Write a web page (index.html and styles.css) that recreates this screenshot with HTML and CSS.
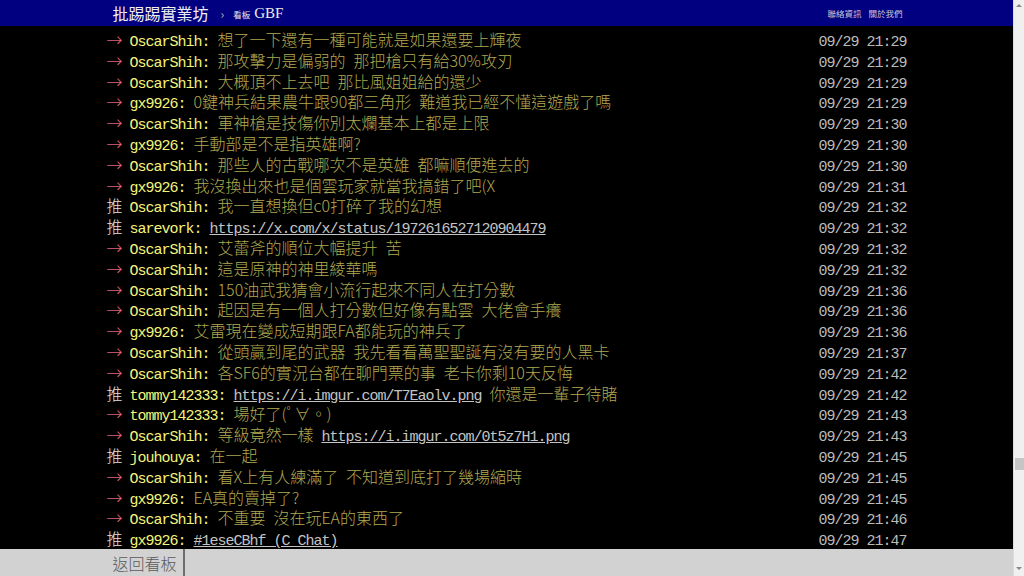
FILE: index.html
```html
<!DOCTYPE html>
<html lang="zh-Hant-TW">
<head>
    <meta charset="UTF-8">
    <meta name="viewport" content="width=device-width, initial-scale=1.0">
    <title>[閒聊] 軍神槍 - 看板 GBF - 批踢踢實業坊</title>
    <link rel="stylesheet" href="styles.css">
</head>
<body>
    <div class="page">
        <div class="topbar">
            <div class="topbar-inner">
                <a class="site-name" href="#">批踢踢實業坊</a>
                <span class="crumb-sep">&rsaquo;</span>
                <a class="board-name" href="#"><span class="board-label">看板</span>GBF</a>
                <div class="topbar-links">
                    <a href="#">聯絡資訊</a>
                    <a href="#">關於我們</a>
                </div>
            </div>
        </div>

        <div class="main">
            <div class="push-list">
                <div class="push"><span class="push-tag arrow">→</span><span class="push-userid">OscarShih:</span><span class="push-content">想了一下還有一種可能就是如果還要上輝夜</span><span class="push-time">09/29 21:29</span></div>
                <div class="push"><span class="push-tag arrow">→</span><span class="push-userid">OscarShih:</span><span class="push-content">那攻擊力是偏弱的 那把槍只有給30%攻刃</span><span class="push-time">09/29 21:29</span></div>
                <div class="push"><span class="push-tag arrow">→</span><span class="push-userid">OscarShih:</span><span class="push-content">大概頂不上去吧 那比風姐姐給的還少</span><span class="push-time">09/29 21:29</span></div>
                <div class="push"><span class="push-tag arrow">→</span><span class="push-userid">gx9926:</span><span class="push-content">0鍵神兵結果農牛跟90都三角形 難道我已經不懂這遊戲了嗎</span><span class="push-time">09/29 21:29</span></div>
                <div class="push"><span class="push-tag arrow">→</span><span class="push-userid">OscarShih:</span><span class="push-content">軍神槍是技傷你別太爛基本上都是上限</span><span class="push-time">09/29 21:30</span></div>
                <div class="push"><span class="push-tag arrow">→</span><span class="push-userid">gx9926:</span><span class="push-content">手動部是不是指英雄啊?</span><span class="push-time">09/29 21:30</span></div>
                <div class="push"><span class="push-tag arrow">→</span><span class="push-userid">OscarShih:</span><span class="push-content">那些人的古戰哪次不是英雄 都嘛順便進去的</span><span class="push-time">09/29 21:30</span></div>
                <div class="push"><span class="push-tag arrow">→</span><span class="push-userid">gx9926:</span><span class="push-content">我沒換出來也是個雲玩家就當我搞錯了吧(X</span><span class="push-time">09/29 21:31</span></div>
                <div class="push"><span class="push-tag">推</span><span class="push-userid">OscarShih:</span><span class="push-content">我一直想換但c0打碎了我的幻想</span><span class="push-time">09/29 21:32</span></div>
                <div class="push"><span class="push-tag">推</span><span class="push-userid">sarevork:</span><span class="push-content"><a href="#">https://x.com/x/status/1972616527120904479</a></span><span class="push-time">09/29 21:32</span></div>
                <div class="push"><span class="push-tag arrow">→</span><span class="push-userid">OscarShih:</span><span class="push-content">艾蕾斧的順位大幅提升 苦</span><span class="push-time">09/29 21:32</span></div>
                <div class="push"><span class="push-tag arrow">→</span><span class="push-userid">OscarShih:</span><span class="push-content">這是原神的神里綾華嗎</span><span class="push-time">09/29 21:32</span></div>
                <div class="push"><span class="push-tag arrow">→</span><span class="push-userid">OscarShih:</span><span class="push-content">150油武我猜會小流行起來不同人在打分數</span><span class="push-time">09/29 21:36</span></div>
                <div class="push"><span class="push-tag arrow">→</span><span class="push-userid">OscarShih:</span><span class="push-content">起因是有一個人打分數但好像有點雲 大佬會手癢</span><span class="push-time">09/29 21:36</span></div>
                <div class="push"><span class="push-tag arrow">→</span><span class="push-userid">gx9926:</span><span class="push-content">艾雷現在變成短期跟FA都能玩的神兵了</span><span class="push-time">09/29 21:36</span></div>
                <div class="push"><span class="push-tag arrow">→</span><span class="push-userid">OscarShih:</span><span class="push-content">從頭贏到尾的武器 我先看看萬聖聖誕有沒有要的人黑卡</span><span class="push-time">09/29 21:37</span></div>
                <div class="push"><span class="push-tag arrow">→</span><span class="push-userid">OscarShih:</span><span class="push-content">各SF6的實況台都在聊門票的事 老卡你剩10天反悔</span><span class="push-time">09/29 21:42</span></div>
                <div class="push"><span class="push-tag">推</span><span class="push-userid">tommy142333:</span><span class="push-content"><a href="#">https://i.imgur.com/T7Eaolv.png</a> 你還是一輩子待賭</span><span class="push-time">09/29 21:42</span></div>
                <div class="push"><span class="push-tag arrow">→</span><span class="push-userid">tommy142333:</span><span class="push-content">場好了(ﾟ∀。)</span><span class="push-time">09/29 21:43</span></div>
                <div class="push"><span class="push-tag arrow">→</span><span class="push-userid">OscarShih:</span><span class="push-content">等級竟然一樣 <a href="#">https://i.imgur.com/0t5z7H1.png</a></span><span class="push-time">09/29 21:43</span></div>
                <div class="push"><span class="push-tag">推</span><span class="push-userid">jouhouya:</span><span class="push-content">在一起</span><span class="push-time">09/29 21:45</span></div>
                <div class="push"><span class="push-tag arrow">→</span><span class="push-userid">OscarShih:</span><span class="push-content">看X上有人練滿了 不知道到底打了幾場縮時</span><span class="push-time">09/29 21:45</span></div>
                <div class="push"><span class="push-tag arrow">→</span><span class="push-userid">gx9926:</span><span class="push-content">EA真的賣掉了?</span><span class="push-time">09/29 21:45</span></div>
                <div class="push"><span class="push-tag arrow">→</span><span class="push-userid">OscarShih:</span><span class="push-content">不重要 沒在玩EA的東西了</span><span class="push-time">09/29 21:46</span></div>
                <div class="push"><span class="push-tag">推</span><span class="push-userid">gx9926:</span><span class="push-content"><a href="#">#1eseCBhf (C_Chat)</a></span><span class="push-time">09/29 21:47</span></div>
            </div>
        </div>

        <div class="footer">
            <div class="footer-inner">
                <a class="back-link" href="#">返回看板</a>
            </div>
        </div>
    </div>

    <div class="scrollbar">
        <span class="scroll-arrow up"></span>
        <div class="scroll-track"><span class="scroll-thumb"></span></div>
        <span class="scroll-arrow down"></span>
    </div>
</body>
</html>
```

FILE: styles.css
```css
html, body {
    height: 100%;
}

body {
    display: flex;
    margin: 0;
    overflow: hidden;
    background-color: #000000;
    font-family: 'Noto Sans CJK TC', sans-serif;
}

a {
    text-decoration: none;
}

.page {
    flex: 1;
    min-width: 0;
    display: flex;
    flex-direction: column;
}

/* top bar */
.topbar {
    flex: none;
    height: 26px;
    background-color: #000080;
}

.topbar-inner {
    width: 792px;
    height: 100%;
    margin: 0 auto;
    padding-left: 2px;
    box-sizing: border-box;
    display: flex;
    align-items: center;
}

.site-name {
    color: #eeeeee;
    font-size: 16px;
    line-height: 20px;
}

.crumb-sep {
    margin: 0 9px 0 12px;
    color: #bbbbbb;
    font-size: 12px;
}

.board-name {
    display: flex;
    align-items: baseline;
    color: #eeeeee;
    font-family: 'Liberation Serif', serif;
    font-size: 15px;
}

.board-label {
    margin-right: 4px;
    font-family: 'Noto Sans CJK TC', sans-serif;
    font-size: 8.5px;
}

.topbar-links {
    margin-left: auto;
    display: flex;
    gap: 7px;
}

.topbar-links a {
    color: #c8c8d8;
    font-size: 8.5px;
}

/* comments */
.main {
    flex: 1;
    min-height: 0;
    overflow: hidden;
    display: flex;
    flex-direction: column;
    justify-content: flex-end;
}

.push-list {
    width: 800px;
    margin: 0 auto;
}

.push {
    display: flex;
    align-items: baseline;
    height: 20.8px;
    line-height: 20.8px;
    white-space: nowrap;
}

.push-tag {
    flex: none;
    width: 23px;
    color: #e4e4e4;
    font-size: 16px;
    font-weight: 300;
}

.push-tag.arrow {
    color: #dc6478;
}

.push-userid {
    flex: none;
    margin-right: 8px;
    color: #f4f47a;
    font-family: 'Liberation Mono', 'Noto Sans CJK TC', monospace;
    font-size: 15px;
    letter-spacing: -1px;
}

.push-content {
    flex: 1;
    min-width: 0;
    color: #b0a852;
    font-size: 16px;
    font-weight: 300;
    word-spacing: 4.4px;
}

.push-content a {
    color: #c4c4c4;
    text-decoration: underline;
    font-family: 'Liberation Mono', monospace;
    font-size: 15px;
    font-weight: 400;
    letter-spacing: -1px;
    word-spacing: 0;
}

.push-time {
    flex: none;
    color: #bbbbbb;
    font-family: 'Liberation Mono', monospace;
    font-size: 15px;
    letter-spacing: -1px;
}

/* bottom bar */
.footer {
    flex: none;
    height: 27px;
    background-color: #d2d2d2;
}

.footer-inner {
    width: 792px;
    height: 100%;
    margin: 0 auto;
    padding-left: 2px;
    box-sizing: border-box;
    display: flex;
}

.back-link {
    display: flex;
    align-items: center;
    padding-right: 6px;
    border-right: 2px solid #6e6e6e;
    color: #5a5a5a;
    font-size: 16px;
    font-weight: 300;
}

/* page scrollbar */
.scrollbar {
    flex: none;
    width: 11px;
    box-sizing: border-box;
    border-left: 1px solid #dcdcdc;
    background-color: #f0f0f0;
    display: flex;
    flex-direction: column;
    align-items: center;
}

.scroll-arrow {
    width: 0;
    height: 0;
    border-left: 3px solid transparent;
    border-right: 3px solid transparent;
}

.scroll-arrow.up {
    margin-top: 4px;
    border-bottom: 3px solid #888888;
}

.scroll-arrow.down {
    margin-bottom: 6px;
    border-top: 3px solid #888888;
}

.scroll-track {
    flex: 1;
    display: flex;
    flex-direction: column;
    justify-content: flex-end;
    padding-bottom: 97px;
}

.scroll-thumb {
    width: 9px;
    height: 12px;
    background-color: #c6c6c6;
}
```
